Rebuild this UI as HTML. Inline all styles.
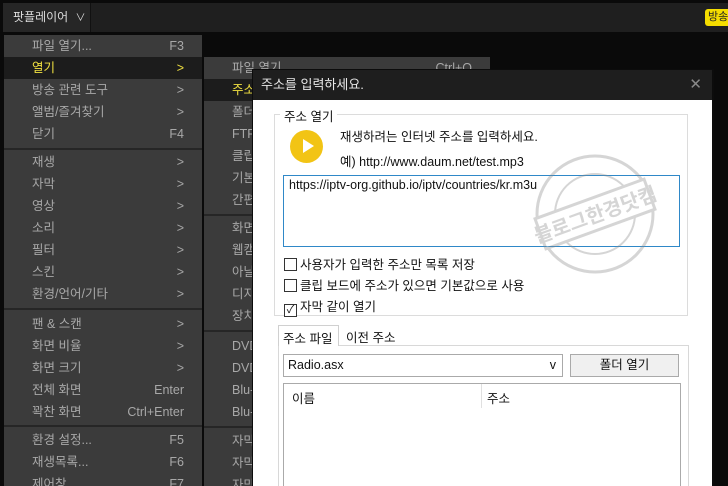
<!DOCTYPE html>
<html><head><meta charset="utf-8"><style>
*{margin:0;padding:0;box-sizing:border-box}
html,body{width:728px;height:486px;overflow:hidden}
body{background:#0a0a0a;font-family:"Liberation Sans","Noto Sans CJK KR",sans-serif;font-size:12.5px;position:relative}
.a{position:absolute;white-space:nowrap}
.top{left:3px;top:3px;width:725px;height:29px;background:#1f1f1f}
.menu{background:#3b3b3b;color:#a8a8a8;overflow:hidden}
.it{position:absolute;left:0;right:0;height:22px;line-height:22px;padding-left:28px}
.it .k{position:absolute;right:18px;top:0}
.sep{position:absolute;left:0;right:0;height:2px;background:#262626}
.hl{background:#1c1c1c;color:#f0e040}
.cb{display:inline-block;width:13px;height:13px;border:1px solid #333;vertical-align:-2px;margin-right:3px;background:#fff}
</style></head><body>
<div class="a top"></div>
<div class="a" style="left:3px;top:3px;width:88px;height:29px;background:#262626;border-right:1px solid #111;color:#ddd;line-height:29px;padding-left:10px;font-size:12px">팟플레이어 <span style="font-size:10px;margin-left:4px">∨</span></div>
<div class="a" style="left:705px;top:9px;width:30px;height:17px;background:#f5dd00;border-radius:3px;font-size:11px;line-height:17px;padding-left:3px;color:#222">방송</div>

<div class="a menu" style="left:4px;top:35px;width:198px;height:451px">
<div class="it" style="top:0">파일 열기...<span class="k">F3</span></div>
<div class="it hl" style="top:22px">열기<span class="k">&gt;</span></div>
<div class="it" style="top:44px">방송 관련 도구<span class="k">&gt;</span></div>
<div class="it" style="top:66px">앨범/즐겨찾기<span class="k">&gt;</span></div>
<div class="it" style="top:88px">닫기<span class="k">F4</span></div>
<div class="sep" style="top:113px"></div>
<div class="it" style="top:116px">재생<span class="k">&gt;</span></div>
<div class="it" style="top:138px">자막<span class="k">&gt;</span></div>
<div class="it" style="top:160px">영상<span class="k">&gt;</span></div>
<div class="it" style="top:182px">소리<span class="k">&gt;</span></div>
<div class="it" style="top:204px">필터<span class="k">&gt;</span></div>
<div class="it" style="top:226px">스킨<span class="k">&gt;</span></div>
<div class="it" style="top:248px">환경/언어/기타<span class="k">&gt;</span></div>
<div class="sep" style="top:273px"></div>
<div class="it" style="top:278px">팬 &amp; 스캔<span class="k">&gt;</span></div>
<div class="it" style="top:300px">화면 비율<span class="k">&gt;</span></div>
<div class="it" style="top:322px">화면 크기<span class="k">&gt;</span></div>
<div class="it" style="top:344px">전체 화면<span class="k">Enter</span></div>
<div class="it" style="top:366px">꽉찬 화면<span class="k">Ctrl+Enter</span></div>
<div class="sep" style="top:390px"></div>
<div class="it" style="top:394px">환경 설정...<span class="k">F5</span></div>
<div class="it" style="top:416px">재생목록...<span class="k">F6</span></div>
<div class="it" style="top:438px">제어창<span class="k">F7</span></div>
</div>

<div class="a menu" style="left:204px;top:57px;width:286px;height:429px">
<div class="it" style="top:0">파일 열기<span class="k">Ctrl+O</span></div>
<div class="it hl" style="top:22px">주소</div>
<div class="it" style="top:44px">폴더</div>
<div class="it" style="top:66px">FTP</div>
<div class="it" style="top:88px">클립</div>
<div class="it" style="top:110px">기본</div>
<div class="it" style="top:132px">간편</div>
<div class="sep" style="top:157px"></div>
<div class="it" style="top:160px">화면</div>
<div class="it" style="top:182px">웹캠</div>
<div class="it" style="top:204px">아날</div>
<div class="it" style="top:226px">디지</div>
<div class="it" style="top:248px">장치</div>
<div class="sep" style="top:273px"></div>
<div class="it" style="top:278px">DVD</div>
<div class="it" style="top:300px">DVD</div>
<div class="it" style="top:322px">Blu-</div>
<div class="it" style="top:344px">Blu-</div>
<div class="sep" style="top:369px"></div>
<div class="it" style="top:373px">자막</div>
<div class="it" style="top:395px">자막</div>
<div class="it" style="top:417px">자막</div>
</div>

<div class="a" style="left:252px;top:69px;width:462px;height:417px;background:#0c0c0c"></div>
<div class="a" style="left:253px;top:70px;width:459px;height:30px;background:#1e1e1e;color:#e8e8e8;font-size:13px;line-height:30px;padding-left:8px">주소를 입력하세요.<span style="position:absolute;right:10px;color:#888;font-size:15px">✕</span></div>
<div class="a" style="left:253px;top:100px;width:459px;height:386px;background:#fff;color:#111;overflow:hidden">
<div class="a" style="left:21px;top:14px;width:414px;height:202px;border:1px solid #dcdcdc"></div>
<div class="a" style="left:27px;top:6px;background:#fff;padding:0 4px">주소 열기</div>
<div class="a" style="left:37px;top:30px;width:33px;height:33px;border-radius:50%;background:#f2c415"></div>
<div class="a" style="left:50px;top:39px;width:0;height:0;border-left:11px solid #fff;border-top:7.5px solid transparent;border-bottom:7.5px solid transparent"></div>
<div class="a" style="left:87px;top:26px">재생하려는 인터넷 주소를 입력하세요.</div>
<div class="a" style="left:87px;top:51px">예) http://www.daum.net/test.mp3</div>
<div class="a" style="left:30px;top:75px;width:397px;height:72px;border:1px solid #2f88c8;padding:2px 5px">https://iptv-org.github.io/iptv/countries/kr.m3u</div>
<div class="a" style="left:31px;top:154px"><span class="cb"></span>사용자가 입력한 주소만 목록 저장</div>
<div class="a" style="left:31px;top:175px"><span class="cb"></span>클립 보드에 주소가 있으면 기본값으로 사용</div>
<div class="a" style="left:31px;top:196px"><span class="cb" style="font-size:11px;line-height:11px;text-align:center">✓</span>자막 같이 열기</div>
<div class="a" style="left:25px;top:225px;width:61px;height:21px;border:1px solid #d0d0d0;border-bottom:none;background:#fff;padding:2px 0 0 4px;z-index:2">주소 파일</div>
<div class="a" style="left:93px;top:227px">이전 주소</div>
<div class="a" style="left:25px;top:245px;width:411px;height:160px;border:1px solid #d8d8d8"></div>
<div class="a" style="left:30px;top:254px;width:280px;height:23px;border:1px solid #aaa;padding:3px 4px">Radio.asx<span style="position:absolute;right:6px">v</span></div>
<div class="a" style="left:317px;top:254px;width:109px;height:23px;border:1px solid #aaa;background:#f0f0f0;text-align:center;line-height:21px">폴더 열기</div>
<div class="a" style="left:30px;top:283px;width:398px;height:120px;border:1px solid #aaa"></div>
<div class="a" style="left:39px;top:288px">이름</div>
<div class="a" style="left:228px;top:284px;width:1px;height:24px;background:#e0e0e0"></div>
<div class="a" style="left:234px;top:288px">주소</div>
<svg class="a" style="left:280px;top:52px" width="124" height="124" viewBox="0 0 124 124" opacity="0.35"><g fill="none" stroke="#888" stroke-width="3"><circle cx="62" cy="62" r="58"/><circle cx="62" cy="62" r="40" stroke-width="2"/></g><g transform="rotate(-20 62 62)"><rect x="4" y="46" width="116" height="32" fill="#fff" stroke="#888" stroke-width="3"/><text x="62" y="70" text-anchor="middle" font-size="20" font-weight="bold" fill="#888" font-family="Noto Sans CJK KR,sans-serif">블로그한경닷컴</text></g></svg>
</div>
</body></html>
